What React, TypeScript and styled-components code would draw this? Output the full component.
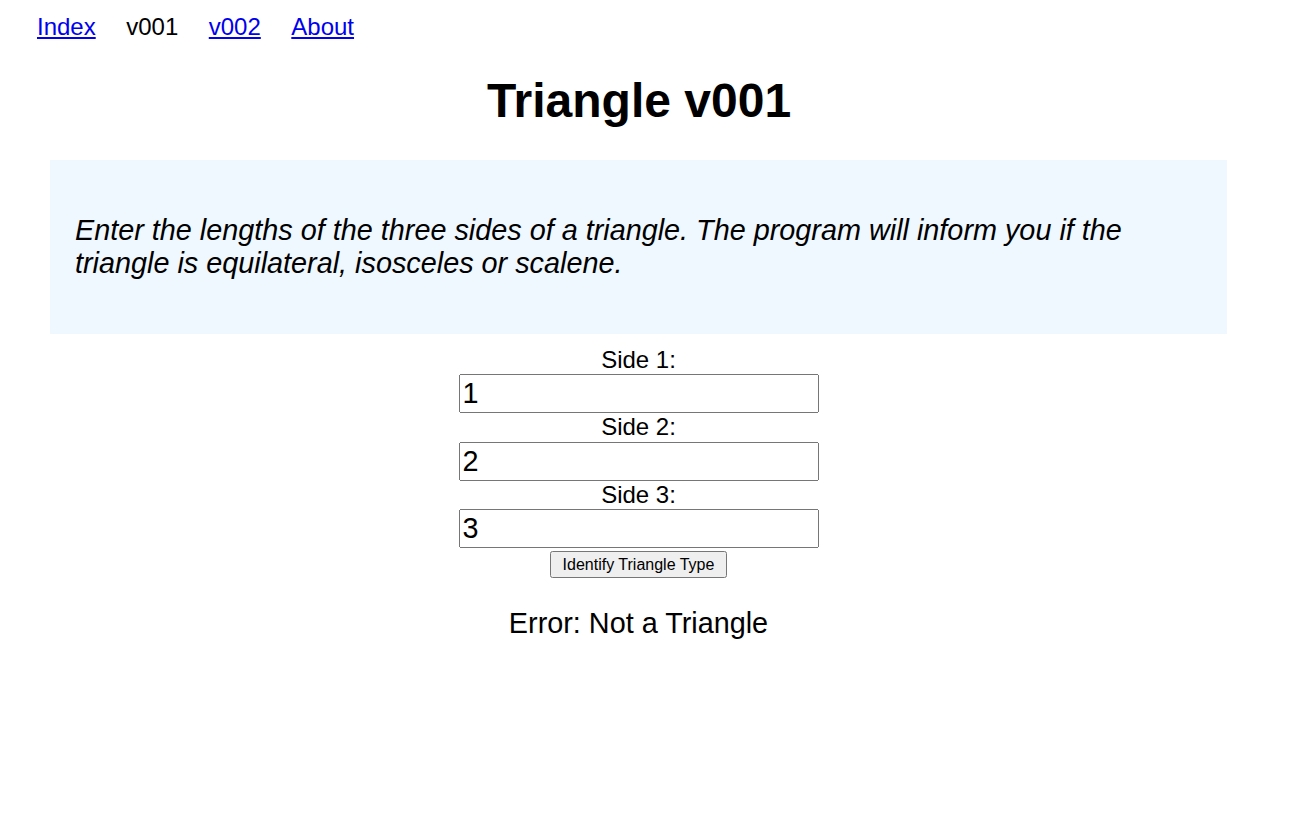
import React, { useState } from "react";
import styled, { createGlobalStyle } from "styled-components";

const GlobalStyle = createGlobalStyle`
  html, body {
    margin: 0;
    padding: 0;
    background: #ffffff;
  }
  body {
    margin: 8px;
    font-family: "Liberation Sans", Arial, sans-serif;
    color: #000000;
  }
`;

const Page = styled.div`
  width: 1262px;
  min-height: 1259px;
`;

const Nav = styled.nav`
  display: flex;
  gap: 30.5px;
  padding: 5px 0 0 29px;
  font-size: 24px;
  line-height: normal;
`;

const NavLink = styled.a`
  color: #0000ee;
  text-decoration: underline;
`;

const NavCurrent = styled.span`
  color: #000000;
`;

const Title = styled.h1`
  font-size: 48px;
  font-weight: bold;
  text-align: center;
  margin: 32px 0;
  line-height: normal;
`;

const Main = styled.main`
  margin: 0 43px 0 42px;
`;

const Intro = styled.div`
  background: #eff7ff;
  padding: 25px;
`;

const IntroText = styled.p`
  font-size: 28.8px;
  font-style: italic;
  margin: 28.8px 0;
  line-height: normal;
`;

const Form = styled.form`
  margin-top: 12px;
  display: flex;
  flex-direction: column;
  align-items: center;
`;

const Label = styled.label`
  display: block;
  font-size: 24px;
  line-height: normal;
  text-align: center;
`;

const Input = styled.input`
  display: block;
  width: 352px;
  margin: 0.5px 0 0;
  font-family: "Liberation Sans", Arial, sans-serif;
  font-size: 28.8px;
  padding: 1px 2px;
  color: #000000;
`;

const Button = styled.button`
  display: block;
  box-sizing: border-box;
  height: 27px;
  margin-top: 3px;
  font-family: "Liberation Sans", Arial, sans-serif;
  font-size: 16px;
  padding: 0 11px;
  color: #000000;
`;

const Result = styled.p`
  font-size: 28.8px;
  text-align: center;
  margin: 28.8px 0;
  line-height: normal;
`;

function classify(a: number, b: number, c: number): string {
  if (!(a > 0 && b > 0 && c > 0) || a + b <= c || a + c <= b || b + c <= a) {
    return "Error: Not a Triangle";
  }
  if (a === b && b === c) return "Equilateral";
  if (a === b || b === c || a === c) return "Isosceles";
  return "Scalene";
}

export default function App() {
  const [sides, setSides] = useState<string[]>(["1", "2", "3"]);
  const [result, setResult] = useState<string>("Error: Not a Triangle");

  const update = (i: number, v: string) => {
    const next = [...sides];
    next[i] = v;
    setSides(next);
  };

  const onSubmit = (e: React.FormEvent) => {
    e.preventDefault();
    const [a, b, c] = sides.map((s) => parseFloat(s));
    setResult(classify(a, b, c));
  };

  return (
    <Page>
      <GlobalStyle />
      <Nav>
        <NavLink href="#">Index</NavLink>
        <NavCurrent>v001</NavCurrent>
        <NavLink href="#">v002</NavLink>
        <NavLink href="#">About</NavLink>
      </Nav>
      <Title>Triangle v001</Title>
      <Main>
        <Intro>
          <IntroText>
            Enter the lengths of the three sides of a triangle. The program will
            inform you if the triangle is equilateral, isosceles or scalene.
          </IntroText>
        </Intro>
        <Form onSubmit={onSubmit}>
          {sides.map((s, i) => (
            <React.Fragment key={i}>
              <Label htmlFor={`side${i + 1}`}>Side {i + 1}:</Label>
              <Input
                id={`side${i + 1}`}
                type="text"
                value={s}
                onChange={(e) => update(i, e.target.value)}
              />
            </React.Fragment>
          ))}
          <Button type="submit">Identify Triangle Type</Button>
        </Form>
        <Result>{result}</Result>
      </Main>
    </Page>
  );
}
